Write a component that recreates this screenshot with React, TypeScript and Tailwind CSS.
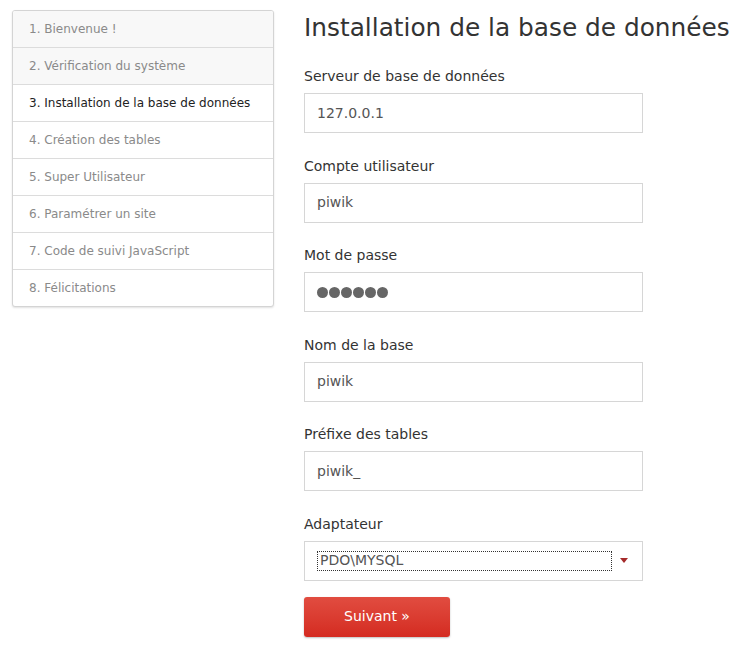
const steps = [
  { label: '1. Bienvenue !', state: 'done' },
  { label: '2. Vérification du système', state: 'done' },
  { label: '3. Installation de la base de données', state: 'current' },
  { label: '4. Création des tables', state: 'todo' },
  { label: '5. Super Utilisateur', state: 'todo' },
  { label: '6. Paramétrer un site', state: 'todo' },
  { label: '7. Code de suivi JavaScript', state: 'todo' },
  { label: '8. Félicitations', state: 'todo' },
];

const fields = [
  { label: 'Serveur de base de données', value: '127.0.0.1' },
  { label: 'Compte utilisateur', value: 'piwik' },
  { label: 'Mot de passe', value: '', password: true },
  { label: 'Nom de la base', value: 'piwik' },
  { label: 'Préfixe des tables', value: 'piwik_' },
];

function StepList() {
  return (
    <ul className="w-[262px] shrink-0 rounded-[3px] border border-[#d4d4d4] bg-white shadow-[0_1px_2px_rgba(0,0,0,0.12)] overflow-hidden">
      {steps.map((s, i) => (
        <li
          key={s.label}
          className={`flex items-center px-[16px] text-[12px] ${
            i > 0 ? 'border-t border-[#dcdcdc] h-[37px]' : 'h-[36px]'
          } ${s.state === 'done' ? 'bg-[#f8f8f8] text-[#8a8a8a]' : ''} ${
            s.state === 'current' ? 'text-[#222]' : ''
          } ${s.state === 'todo' ? 'text-[#8a8a8a]' : ''}`}
        >
          {s.label}
        </li>
      ))}
    </ul>
  );
}

function Field({ label, value, password }: { label: string; value: string; password?: boolean }) {
  return (
    <div className="mb-[24.5px]">
      <div className="text-[14px] text-[#333] leading-[17px] mb-[8px]">{label}</div>
      <div className="h-[40px] w-[339px] border border-[#d6d6d6] bg-white flex items-center px-[12px] text-[14px] text-[#555]">
        {password ? (
          <span className="flex gap-[1px]">
            {Array.from({ length: 6 }).map((_, i) => (
              <span key={i} className="w-[11px] h-[11px] rounded-full bg-[#666]" />
            ))}
          </span>
        ) : (
          value
        )}
      </div>
    </div>
  );
}

export default function App() {
  return (
    <div
      className="w-[736px] h-[650px] bg-white flex items-start gap-[30px] pl-[12px] pt-[10px] overflow-hidden"
      style={{ fontFamily: '"DejaVu Sans", Verdana, sans-serif' }}
    >
      <StepList />
      <div className="flex-1">
        <h1 className="text-[24.8px] leading-[32px] text-[#333] mt-[2px] mb-[24px] whitespace-nowrap">
          Installation de la base de données
        </h1>
        {fields.map((f) => (
          <Field key={f.label} {...f} />
        ))}
        <div className="mb-[16px]">
          <div className="text-[14px] text-[#333] leading-[17px] mb-[8px]">Adaptateur</div>
          <div className="h-[40px] w-[339px] border border-[#d6d6d6] bg-white flex items-center pl-[12px] pr-[14px]">
            <div className="flex-1 h-[20px] border border-dotted border-[#333] flex items-center px-[2px] text-[14px] text-[#555]">
              PDO\MYSQL
            </div>
            <svg width="8" height="5" viewBox="0 0 8 5" className="ml-[8px]">
              <path d="M0 0h8L4 5z" fill="#a52a2a" />
            </svg>
          </div>
        </div>
        <button className="h-[40px] w-[146px] rounded-[3px] bg-gradient-to-b from-[#e14c40] to-[#d42a20] text-white text-[14px] shadow-[0_1px_2px_rgba(0,0,0,0.25)]">
          Suivant »
        </button>
      </div>
    </div>
  );
}
